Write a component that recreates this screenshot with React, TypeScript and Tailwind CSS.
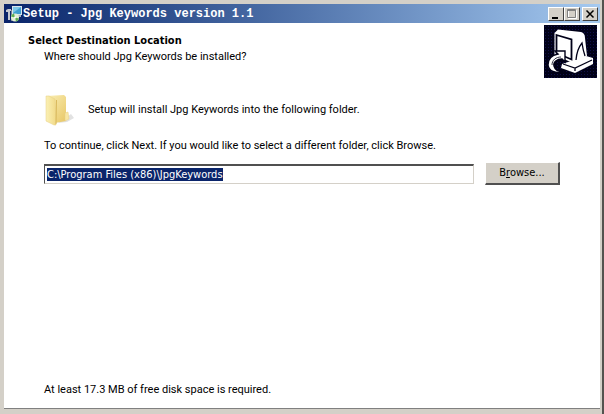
import { useEffect, useRef, useState } from "react";

function SetupIcon() {
  return (
    <svg width="16" height="16" viewBox="0 0 16 16" aria-hidden="true">
      <path d="M6 0h10v9H6z" fill="#d8e4ec" />
      <path d="M7 1h8v7H7z" fill="#3f9fd0" />
      <path d="M7 1h8l-8 6z" fill="#7cc6e6" />
      <path d="M11 9h4v2h-4z" fill="#a8b0b8" />
      <path d="M0 4l2-1h3v2H4v9H2V6H0z" fill="#c4c8d0" />
      <path d="M5 4h1v11H5z" fill="#7a8290" />
      <circle cx="9" cy="11.5" r="4" fill="#e4f0d8" />
      <path d="M9 11.5l-4 -1a4 4 0 0 1 3 -3zM9 11.5l4 1a4 4 0 0 1 -3 3z" fill="#5fae50" />
      <circle cx="9" cy="11.5" r="1" fill="#fff" />
    </svg>
  );
}

function WizardImage() {
  return (
    <svg className="block shrink-0" width="53" height="53" viewBox="0 0 53 53" aria-hidden="true">
      <defs>
        <pattern id="dots" width="3" height="3" patternUnits="userSpaceOnUse">
          <path d="M0 0h3v3H0z" fill="#000018" />
          <path d="M1 1h1v1H1z" fill="#10104a" />
        </pattern>
      </defs>
      <path d="M0 0h53v53H0z" fill="url(#dots)" />
      {/* Keyboard base */}
      <path d="M18 39L42 31L49 33V39L31 48L17 43z" fill="#fff" />
      <path d="M19 39L31 43L48 35M31 43V46" stroke="#000018" strokeWidth="1.3" fill="none" />
      {/* Monitor */}
      <path d="M10.5 8L14 4.5L37 7Q41 8 41 13L43 31L29 38L10.5 30z" fill="#fff" />
      <path d="M12.5 10L27.5 14.5V34.5L12.5 28z" fill="#fff" stroke="#000018" strokeWidth="1.8" />
      <path d="M32 35Q33 24 38 18Q39 25 41 31" fill="none" stroke="#000018" strokeWidth="1.3" />
      {/* Arrow */}
      <path
        d="M11 26L21 26V37L18 34C13 34 9 37 10 41C11 45 15 47 20 47C11 49 5 46 4 40C4 34 8 30 14 29z"
        fill="#fff"
        stroke="#000018"
        strokeWidth="1.4"
      />
      <path d="M8 40C8 35 12 32 17 32" stroke="#000018" strokeWidth="0.8" fill="none" />
    </svg>
  );
}

function FolderIcon() {
  return (
    <svg width="32" height="32" viewBox="0 0 32 32" aria-hidden="true">
      <defs>
        <linearGradient id="front" x1="0" x2="1" y1="0" y2="0">
          <stop offset="0" stopColor="#fbf0b4" />
          <stop offset="1" stopColor="#f1da88" />
        </linearGradient>
        <linearGradient id="back" x1="0" x2="1" y1="0" y2="1">
          <stop offset="0" stopColor="#fbf0b8" />
          <stop offset="1" stopColor="#e8c766" />
        </linearGradient>
      </defs>
      <path d="M20 25L27 20L30 24L23 28L14 29z" fill="#e2e2e2" />
      <path d="M2 2L20 1L22 3V27L11 29L2 27z" fill="url(#back)" />
      <path d="M2 2L5 2L11 5L12 31L10 31L2 27z" fill="url(#front)" stroke="#e6cf84" strokeWidth="0.5" />
      <path d="M12.5 6L12 30" stroke="#d9b95c" strokeWidth="1" />
      <path d="M21 19L24 18L25 25L21 27z" fill="#f8e6a2" stroke="#e6cf84" strokeWidth="0.5" />
    </svg>
  );
}

const captionButton =
  "flex h-[14px] w-4 items-center justify-center border border-t-white border-l-white border-r-[#404040] border-b-[#404040] bg-[#d4d0c8]";

function TitleBar() {
  return (
    <header className="flex h-[19px] items-center bg-linear-to-r from-[#0a246a] to-[#a6caf0] pr-[2px] pl-[2px]">
      <SetupIcon />
      <h1 className="ml-px flex-1 truncate font-['Liberation_Mono',monospace] text-[12px] leading-4 font-bold text-white">
        Setup - Jpg Keywords version 1.1
      </h1>
      <div className="flex">
        <button type="button" aria-label="Minimize" className={captionButton}>
          <svg width="10" height="10" viewBox="0 0 10 10">
            <path d="M1 8h6v2H1z" fill="#000" />
          </svg>
        </button>
        <button type="button" aria-label="Maximize" disabled className={captionButton}>
          <svg width="10" height="10" viewBox="0 0 10 10">
            <path d="M1.5 1.5h8v8h-8z" stroke="#fff" fill="none" />
            <path d="M0.5 0.5h8v8h-8zM0 1.5h9" stroke="#808080" fill="none" />
          </svg>
        </button>
        <button type="button" aria-label="Close" className={`${captionButton} ml-[2px]`}>
          <svg width="10" height="10" viewBox="0 0 10 10">
            <path d="M1.5 1.5l7 7M8.5 1.5l-7 7" stroke="#000" strokeWidth="1.5" />
          </svg>
        </button>
      </div>
    </header>
  );
}

export default function App() {
  const [folder, setFolder] = useState("C:\\Program Files (x86)\\JpgKeywords");
  const inputRef = useRef<HTMLInputElement>(null);

  useEffect(() => {
    inputRef.current?.focus();
    inputRef.current?.select();
  }, []);

  return (
    <div className="flex min-h-screen flex-col border-r-2 border-r-[#55534f] bg-[#d4d0c8] pt-1 pr-[2px] pl-1 font-['Roboto',sans-serif] text-[11px] leading-4 text-black">
      <TitleBar />
      <main className="flex flex-1 flex-col border-b border-[#808080] bg-white">
        {/* Page heading */}
        <div className="flex items-start justify-between pt-[2px] pr-[3px] pl-6">
          <div className="pt-2">
            <h2 className="font-['DejaVu_Sans_Condensed','DejaVu_Sans',sans-serif] font-bold">
              Select Destination Location
            </h2>
            <p className="pl-4">Where should Jpg Keywords be installed?</p>
          </div>
          <WizardImage />
        </div>

        <div className="flex flex-1 flex-col pt-4 pr-10 pl-10">
          <div className="flex items-center gap-3">
            <FolderIcon />
            <p>Setup will install Jpg Keywords into the following folder.</p>
          </div>
          <label htmlFor="folder" className="mt-3">
            To continue, click Next. If you would like to select a different folder, click Browse.
          </label>
          <div className="mt-2 flex items-center gap-[11px]">
            <input
              id="folder"
              ref={inputRef}
              type="text"
              value={folder}
              onChange={(e) => setFolder(e.target.value)}
              className="h-5 min-w-0 flex-1 border border-t-2 border-t-[#505050] border-r-[#d4d0c8] border-b-[#d4d0c8] border-l-[#505050] bg-white px-[2px] font-['DejaVu_Sans_Condensed','DejaVu_Sans',sans-serif] outline-none selection:bg-[#0a246a] selection:text-white"
            />
            <button
              type="button"
              className="h-[23px] w-[75px] border border-t-white border-r-2 border-r-[#505050] border-b-2 border-b-[#505050] border-l-white bg-[#d4d0c8] font-['DejaVu_Sans_Condensed','DejaVu_Sans',sans-serif]"
            >
              B<span className="underline">r</span>owse...
            </button>
          </div>
          <p className="mt-auto pb-[10px]">At least 17.3 MB of free disk space is required.</p>
        </div>
      </main>
      <footer className="h-[5px]" />
    </div>
  );
}
